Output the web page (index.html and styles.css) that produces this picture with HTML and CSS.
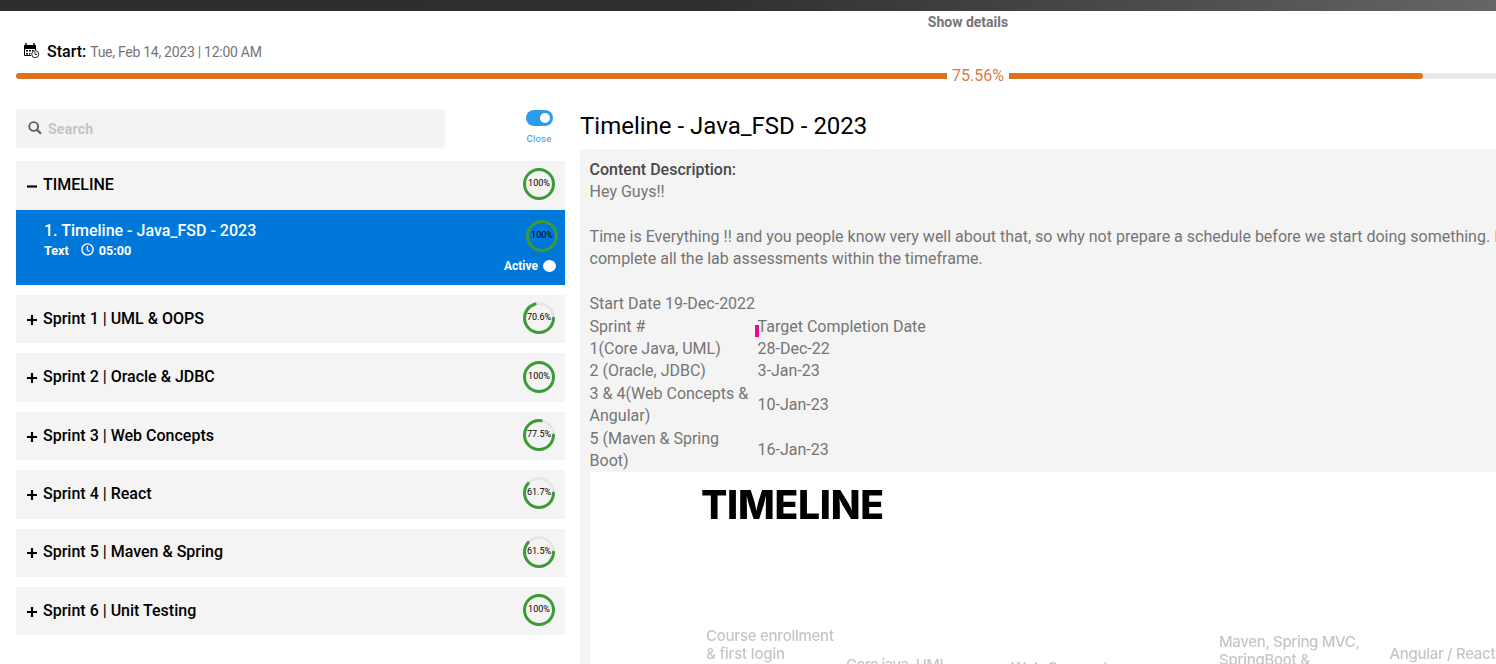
FILE: index.html
```html
<!DOCTYPE html>
<html lang="en">
<head>
<meta charset="utf-8">
<title>Timeline - Java_FSD - 2023</title>
<link rel="stylesheet" href="styles.css">
</head>
<body>
<div class="page">
  <div class="topbar"></div>
  <header class="header">
    <div class="show-details">Show details</div>
    <div class="start">
      <svg class="cal" width="17" height="16" viewBox="0 0 17 16">
        <path d="M1 2h12v4H1z" fill="#000"/>
        <path d="M3 0v3M11 0v3" stroke="#000" stroke-width="1.4"/>
        <path d="M1.5 5v7.5H8M12.5 5v2" fill="none" stroke="#000"/>
        <path d="M3 7h2v1.6H3zM6 7h2v1.6H6zM9 7h1.5v1H9zM3 10h2v1.5H3zM6 10h1.4v1.5H6z" fill="#000"/>
        <circle cx="12.2" cy="11.2" r="3.5" fill="#fff" stroke="#222"/>
        <path d="M12 9v2.4h2" fill="none" stroke="#222"/>
      </svg>
      <span class="start-label">Start:</span>
      <span class="start-date">Tue, Feb 14, 2023 | 12:00 AM</span>
    </div>
    <div class="progress">
      <div class="progress-fill" style="width:75.56%"></div>
      <span class="progress-text">75.56%</span>
    </div>
  </header>

  <main class="columns">
    <aside class="sidebar">
      <div class="tools">
        <div class="search">
          <svg width="14" height="14" viewBox="0 0 14 14"><circle cx="5.7" cy="5.5" r="4.4" fill="none" stroke="#5c5f68" stroke-width="1.9"/><path d="M9 8.8l4 4" stroke="#5c5f68" stroke-width="2.2"/></svg>
          <span>Search</span>
        </div>
        <div class="toggle">
          <div class="switch"><div class="knob"></div></div>
          <span>Close</span>
        </div>
      </div>

      <section class="group">
        <div class="row">
          <svg class="sign" width="10" height="10" viewBox="0 0 10 10"><path d="M0 5.5h10" /></svg>
          <span class="row-title">TIMELINE</span>
          <div class="ring"><svg width="32" height="32" viewBox="0 0 32 32"><circle class="arc" cx="16" cy="16" r="14.5"/></svg><span>100%</span></div>
        </div>
        <div class="lesson">
          <div class="lesson-info">
            <div class="lesson-title">1. Timeline - Java_FSD - 2023</div>
            <div class="lesson-meta"><span>Text</span>
              <svg width="13" height="13" viewBox="0 0 13 13"><circle cx="6.5" cy="6.5" r="5.6" fill="none" stroke="#fff" stroke-width="1.4"/><path d="M6.3 3v3.8l2.2 1.8" fill="none" stroke="#fff" stroke-width="1.2"/></svg>
              <span>05:00</span></div>
          </div>
          <div class="lesson-state">
            <div class="ring"><svg width="32" height="32" viewBox="0 0 32 32"><circle class="arc" cx="16" cy="16" r="14.5"/></svg><span>100%</span></div>
            <div class="active">Active <i class="dot"></i></div>
          </div>
        </div>
      </section>

      <div class="row">
        <svg class="sign" width="10" height="10" viewBox="0 0 10 10"><path d="M0 5h10M5 0v10"/></svg>
        <span class="row-title">Sprint 1 | UML &amp; OOPS</span>
        <div class="ring"><svg width="32" height="32" viewBox="0 0 32 32"><circle class="track" cx="16" cy="16" r="14.5"/><circle class="arc" cx="16" cy="16" r="14.5" pathLength="100" stroke-dasharray="70.6 100"/></svg><span>70.6%</span></div>
      </div>
      <div class="row">
        <svg class="sign" width="10" height="10" viewBox="0 0 10 10"><path d="M0 5h10M5 0v10"/></svg>
        <span class="row-title">Sprint 2 | Oracle &amp; JDBC</span>
        <div class="ring"><svg width="32" height="32" viewBox="0 0 32 32"><circle class="arc" cx="16" cy="16" r="14.5"/></svg><span>100%</span></div>
      </div>
      <div class="row">
        <svg class="sign" width="10" height="10" viewBox="0 0 10 10"><path d="M0 5h10M5 0v10"/></svg>
        <span class="row-title">Sprint 3 | Web Concepts</span>
        <div class="ring"><svg width="32" height="32" viewBox="0 0 32 32"><circle class="track" cx="16" cy="16" r="14.5"/><circle class="arc" cx="16" cy="16" r="14.5" pathLength="100" stroke-dasharray="77.5 100"/></svg><span>77.5%</span></div>
      </div>
      <div class="row">
        <svg class="sign" width="10" height="10" viewBox="0 0 10 10"><path d="M0 5h10M5 0v10"/></svg>
        <span class="row-title">Sprint 4 | React</span>
        <div class="ring"><svg width="32" height="32" viewBox="0 0 32 32"><circle class="track" cx="16" cy="16" r="14.5"/><circle class="arc" cx="16" cy="16" r="14.5" pathLength="100" stroke-dasharray="61.7 100"/></svg><span>61.7%</span></div>
      </div>
      <div class="row">
        <svg class="sign" width="10" height="10" viewBox="0 0 10 10"><path d="M0 5h10M5 0v10"/></svg>
        <span class="row-title">Sprint 5 | Maven &amp; Spring</span>
        <div class="ring"><svg width="32" height="32" viewBox="0 0 32 32"><circle class="track" cx="16" cy="16" r="14.5"/><circle class="arc" cx="16" cy="16" r="14.5" pathLength="100" stroke-dasharray="61.5 100"/></svg><span>61.5%</span></div>
      </div>
      <div class="row">
        <svg class="sign" width="10" height="10" viewBox="0 0 10 10"><path d="M0 5h10M5 0v10"/></svg>
        <span class="row-title">Sprint 6 | Unit Testing</span>
        <div class="ring"><svg width="32" height="32" viewBox="0 0 32 32"><circle class="arc" cx="16" cy="16" r="14.5"/></svg><span>100%</span></div>
      </div>
    </aside>

    <article class="content">
      <h1>Timeline - Java_FSD - 2023</h1>
      <div class="description">
        <strong>Content Description:</strong>
        <p>Hey Guys!!</p>
        <p class="spaced">Time is Everything !! and you people know very well about that, so why not prepare a schedule before we start doing something. I<br>complete all the lab assessments within the timeframe.</p>
        <p class="spaced">Start Date 19-Dec-2022</p>
        <table>
          <tr><td>Sprint #</td><td class="marked">Target Completion Date</td></tr>
          <tr><td>1(Core Java, UML)</td><td>28-Dec-22</td></tr>
          <tr><td>2 (Oracle, JDBC)</td><td>3-Jan-23</td></tr>
          <tr><td>3 &amp; 4(Web Concepts &amp; Angular)</td><td>10-Jan-23</td></tr>
          <tr><td>5 (Maven &amp; Spring Boot)</td><td>16-Jan-23</td></tr>
        </table>
        <svg class="chart" width="1280" height="240" viewBox="0 0 1280 240">
          <text class="chart-title" x="111" y="47.4" textLength="183">TIMELINE</text>
          <g class="chart-label">
            <text x="116" y="169" textLength="128">Course enrollment</text>
            <text x="116" y="187" textLength="79">&amp; first login</text>
            <text x="256" y="198" textLength="102">Core java, UML</text>
            <text x="421" y="201">Web Concepts</text>
            <text x="629" y="175.4" textLength="141">Maven, Spring MVC,</text>
            <text x="629" y="192.8" textLength="91">SpringBoot &amp;</text>
            <text x="799.5" y="187.4" textLength="106">Angular / React</text>
          </g>
        </svg>
      </div>
    </article>
  </main>
</div>
</body>
</html>
```
FILE: styles.css
```css
* { box-sizing: border-box; }
html, body { margin: 0; height: 664px; overflow: hidden; background: #fff; }
body { font-family: Roboto, "Liberation Sans", sans-serif; font-size: 16px; color: #757575; }
svg { display: block; flex: none; }
p, h1 { margin: 0; }

.page { width: 1936px; height: 664px; overflow: hidden; }
.topbar { height: 11px; background: linear-gradient(90deg, #2d2d2d 0, #2f2f2f 700px, #4b4b4b 1150px, #666 1496px); }

.header { height: 98px; }
.show-details { height: 22px; line-height: 22px; text-align: center; font-size: 14px; font-weight: 700; color: #757575; }
.start { display: flex; align-items: center; height: 36px; padding-left: 23px; }
.cal { margin-right: 7px; }
.start-label { font-weight: 500; color: #000; margin-right: 4px; }
.start-date { padding-top: 2px; font-size: 14px; letter-spacing: -0.27px; color: #757575; }
.progress { position: relative; width: 1862px; height: 6px; margin: 4px 0 0 16px; background: #e8e8e8; border-radius: 3px; }
.progress-fill { height: 6px; background: #dd7321; border-radius: 3px; }
.progress-text { position: absolute; left: 50%; top: -7px; width: 62px; text-align: center; line-height: 20px; background: #fff; color: #dd7a45; }

.columns { display: flex; gap: 15px; padding-left: 16px; }
.sidebar { width: 549px; flex: none; }
.tools { display: flex; height: 52.4px; align-items: flex-start; }
.search { display: flex; align-items: center; gap: 6px; width: 429px; height: 39px; padding-left: 12px; background: #f3f3f3; border-radius: 3px; font-size: 14px; font-weight: 700; letter-spacing: 0.25px; color: #c4c4c4; }
.search svg { margin-top: -1px; }
.search span { padding-top: 1px; }
.toggle { display: flex; flex-direction: column; align-items: center; width: 28px; margin-left: 80px; padding-top: 1px; font-size: 9.6px; letter-spacing: 0.2px; line-height: 12px; color: #2b9ceb; }
.toggle span { margin-top: 7px; }
.switch { width: 27px; height: 16px; border-radius: 8px; background: #2b9ceb; display: flex; justify-content: flex-end; align-items: center; padding-right: 3px; }
.knob { width: 10px; height: 10px; border-radius: 50%; background: #fff; }

.row { display: flex; align-items: center; height: 48.4px; margin-bottom: 10.05px; padding: 0 10px 1.8px 11px; background: #f4f4f4; color: #000; font-weight: 500; }
.group { margin-bottom: 10px; }
.group .row { margin-bottom: 0; padding-bottom: 2.6px; }
.sign { stroke: #000; stroke-width: 2.2; margin: 3px 6px 0 0; }
.row-title { flex: 1; }
.ring { position: relative; width: 32px; height: 32px; }
.ring svg { overflow: visible; }
.ring circle { fill: none; stroke-width: 3; }
.ring .track { stroke: #e6e6e6; }
.ring .arc { stroke: #3b9b35; stroke-linecap: round; }
.ring span { position: absolute; left: -4px; right: -4px; top: 9px; line-height: 12px; text-align: center; font-size: 9px; font-weight: 400; color: #000; }
.lesson { display: flex; justify-content: space-between; height: 75.1px; padding: 10px 7px 0 28px; background: #0078d9; color: #fff; font-weight: 700; }
.lesson-title { line-height: 21px; font-weight: 500; }
.lesson-meta { display: flex; align-items: center; font-size: 12.6px; line-height: 20px; }
.lesson-meta svg { margin: -2px 5px 0 12px; }
.lesson-state { display: flex; flex-direction: column; align-items: flex-end; }
.active { display: flex; align-items: center; gap: 5px; margin: 7px 2px 0 0; font-size: 12px; line-height: 14px; }
.dot { width: 13px; height: 12px; border-radius: 50%; background: #fff; }

.content { width: 1298px; flex: none; }
.content h1 { height: 40px; line-height: 34px; font-size: 24px; font-weight: 400; color: #000; }
.description { padding: 9.8px 10px 0 9.6px; background: #f4f4f4; border-radius: 3px; line-height: 22.4px; white-space: nowrap; }
.description strong { display: block; font-weight: 500; color: #484848; }
.spaced { margin-top: 22.4px; }
table { border-collapse: collapse; }
td { padding: 0; white-space: normal; vertical-align: middle; }
td:first-child { width: 168px; }
td:last-child { width: 200px; }
.marked { position: relative; }
.marked::before { content: ""; position: absolute; left: -3px; top: 9px; width: 4px; height: 12px; background: #ec0b8d; }
.chart { background: #fff; font-family: Inter, "Liberation Sans", sans-serif; }
.chart-title { font-size: 39px; font-weight: 800; fill: #000; filter: blur(0.4px); }
.chart-label { font-size: 15px; font-weight: 500; fill: #c6c6c6; filter: blur(0.5px); }
```
